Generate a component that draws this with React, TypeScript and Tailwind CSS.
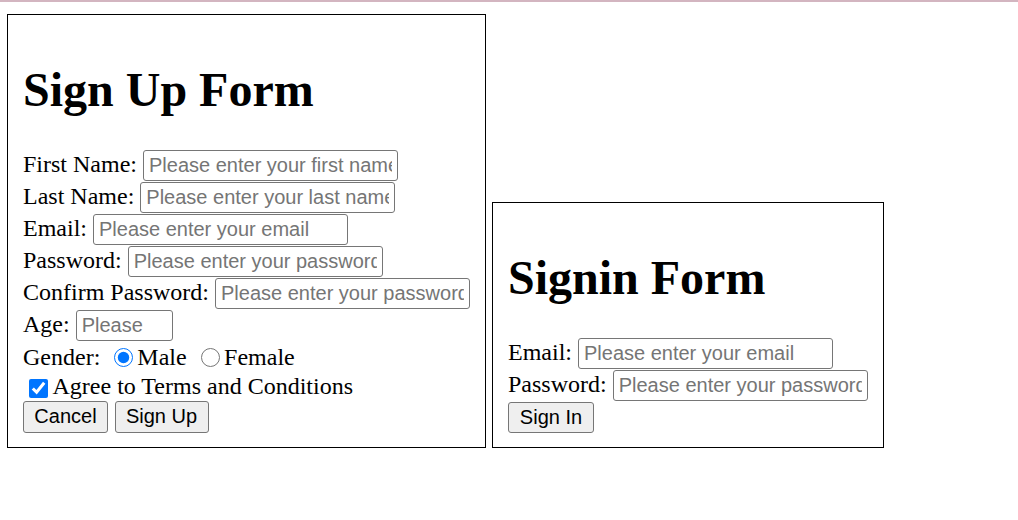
import React from "react";

const inputCls =
  "h-[31.5px] w-[255px] shrink-0 rounded-[3px] border border-[#767676] bg-white pl-[5px] pr-[5px] py-0 font-['Liberation_Sans',Arial,sans-serif] text-[20px] text-black outline-none placeholder:text-[#757575]";

const btnCls =
  "h-[31.5px] shrink-0 rounded-[3px] border border-[#767676] bg-[#efefef] p-0 text-center font-['Liberation_Sans',Arial,sans-serif] text-[20px] leading-[23px] text-black";

function Row({ label, placeholder, type = "text", extra = "" }: { label: string; placeholder: string; type?: string; extra?: string }) {
  return (
    <div className="flex h-[32px] items-start gap-[6px]">
      <label className="shrink-0 whitespace-nowrap leading-[28px]">{label}</label>
      <input type={type} placeholder={placeholder} className={`${inputCls} ${extra}`} />
    </div>
  );
}

export default function App() {
  return (
    <div className="min-h-screen bg-white font-['Liberation_Serif','Times_New_Roman',serif] text-[24px] text-black">
      <div className="h-[2px] bg-[#d3b5c0]" />
      <div className="flex items-end gap-[6px] pl-[7px] pt-[12px]">
        <form className="h-[434px] w-[479px] shrink-0 border border-black px-[15px] pt-[15px]">
          <h1 className="mt-[32px] mb-[32.5px] text-[48px] font-bold leading-[55px]">Sign Up Form</h1>
          <Row label="First Name:" placeholder="Please enter your first name" />
          <Row label="Last Name:" placeholder="Please enter your last name" />
          <Row label="Email:" placeholder="Please enter your email" type="email" />
          <Row label="Password:" placeholder="Please enter your password" type="password" />
          <Row label="Confirm Password:" placeholder="Please enter your password" type="password" />
          <div className="flex h-[32px] items-start gap-[6px]">
            <label className="shrink-0 whitespace-nowrap leading-[28px]">Age:</label>
            <input type="text" placeholder="Please enter your age" className={`${inputCls} !w-[97px] !pr-[25px]`} />
          </div>
          <div className="flex h-[30px] items-start">
            <span className="leading-[30px]">Gender:</span>
            <input type="radio" name="gender" defaultChecked className="ml-[13.5px] mt-[6.5px] h-[19px] w-[19px] shrink-0" />
            <span className="ml-[4.5px] leading-[30px]">Male</span>
            <input type="radio" name="gender" className="ml-[14px] mt-[6.5px] h-[19px] w-[19px] shrink-0" />
            <span className="ml-[4.5px] leading-[30px]">Female</span>
          </div>
          <div className="flex h-[29.5px] items-start">
            <input type="checkbox" defaultChecked className="ml-[6px] mt-[7px] h-[19px] w-[19px] shrink-0" />
            <span className="ml-[4.5px] whitespace-nowrap leading-[29.5px]">Agree to Terms and Conditions</span>
          </div>
          <div className="flex h-[31.5px] items-start gap-[6.5px]">
            <button type="button" className={`${btnCls} w-[85px]`}>Cancel</button>
            <button type="button" className={`${btnCls} w-[94px]`}>Sign Up</button>
          </div>
        </form>
        <form className="h-[246px] w-[392px] shrink-0 border border-black px-[15px] pt-[15px]">
          <h1 className="mt-[32px] mb-[32.5px] text-[48px] font-bold leading-[55px]">Signin Form</h1>
          <Row label="Email:" placeholder="Please enter your email" type="email" />
          <Row label="Password:" placeholder="Please enter your password" type="password" />
          <div className="flex h-[31.5px] items-start">
            <button type="button" className={`${btnCls} w-[86px]`}>Sign In</button>
          </div>
        </form>
      </div>
    </div>
  );
}
